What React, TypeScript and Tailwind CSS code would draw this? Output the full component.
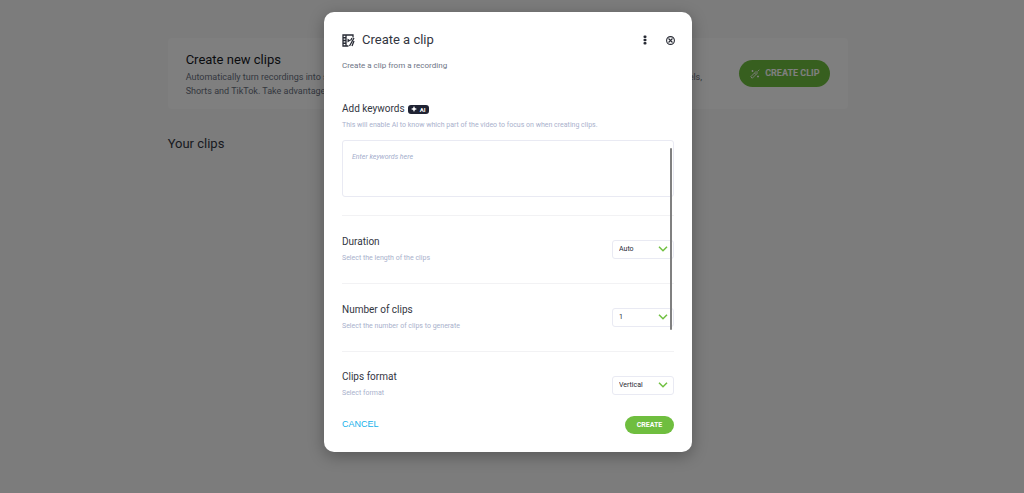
import type { ReactNode } from "react";

type SettingOption = {
  id: string;
  label: string;
  hint: string;
  options: string[];
};

const settings: SettingOption[] = [
  {
    id: "duration",
    label: "Duration",
    hint: "Select the length of the clips",
    options: ["Auto", "30 seconds", "60 seconds"],
  },
  {
    id: "clip-count",
    label: "Number of clips",
    hint: "Select the number of clips to generate",
    options: ["1", "2", "3"],
  },
  {
    id: "clip-format",
    label: "Clips format",
    hint: "Select format",
    options: ["Vertical", "Square", "Horizontal"],
  },
];

function WandIcon() {
  return (
    <svg viewBox="0 0 20 20" className="size-[10px]" fill="none" stroke="currentColor" strokeWidth="1.8">
      <path d="M1.5 15.5 12 5l3 3L4.500 18.500Z" />
      <path d="m9 8 3 3M5 2v4M3 4h4M16 13v4M14 15h4M15 5l3.500-3.500" />
    </svg>
  );
}

function FilmIcon() {
  return (
    <svg viewBox="0 0 26 26" className="size-[13px]" fill="none" stroke="currentColor" strokeWidth="2.6">
      <path d="M22 7V2H2v22h11M8 2v22" />
      <path d="M2 7.500h6M2 13h6M2 18.500h6" />
      <path d="m11 9 6 4-6 4Z" fill="currentColor" stroke="none" />
      <path d="m24 8-9 16M20 8l-3 5M24 14l-4 10" />
    </svg>
  );
}

function CloseIcon() {
  return (
    <svg viewBox="0 0 18 18" className="size-[9px]" fill="none" stroke="currentColor" strokeWidth="2.2">
      <circle cx="9" cy="9" r="7.800" />
      <path d="m5 5 8 8M13 5l-8 8" />
    </svg>
  );
}

function MoreIcon() {
  return (
    <svg viewBox="0 0 4 10" className="h-[10px] w-1" fill="currentColor">
      <rect x="0.500" y="0.500" width="3" height="2.500" rx="1" />
      <rect x="0.500" y="3.800" width="3" height="2.500" rx="1" />
      <rect x="0.500" y="7.100" width="3" height="2.500" rx="1" />
    </svg>
  );
}

function AiBadge() {
  return (
    <span className="flex h-[9px] w-[21px] items-center justify-center gap-[3px] rounded-[3px] bg-[#1f2333] text-[6px] font-bold text-white">
      <svg viewBox="0 0 10 10" className="size-[6px]" fill="currentColor">
        <path d="M5 0 6.500 3.500 10 5 6.500 6.500 5 10 3.500 6.500 0 5 3.500 3.500Z" />
      </svg>
      AI
    </span>
  );
}

function FieldLabel({ htmlFor, children }: { htmlFor: string; children: ReactNode }) {
  return (
    <label htmlFor={htmlFor} className="block text-[10px] leading-4 text-[#33363f]">
      {children}
    </label>
  );
}

function SettingRow({ setting }: { setting: SettingOption }) {
  return (
    <div className="flex h-[68px] items-center justify-between border-t border-[#f2f2f4] last-of-type:h-[67px]">
      <div>
        <FieldLabel htmlFor={setting.id}>{setting.label}</FieldLabel>
        <p className="text-[7px] leading-4 text-[#a9b1cc]">{setting.hint}</p>
      </div>
      <div className="relative">
        <select
          id={setting.id}
          className="block h-[19px] w-[62px] appearance-none rounded-[3px] border border-[#e9eaf3] bg-white pl-1.5 text-[7px] text-[#272a34]"
        >
          {setting.options.map((option) => (
            <option key={option}>{option}</option>
          ))}
        </select>
        <svg
          viewBox="0 0 10 6"
          className="pointer-events-none absolute top-[6px] right-1.5 h-[6px] w-[10px] text-[#70c040]"
          fill="none"
          stroke="currentColor"
          strokeWidth="1.5"
        >
          <path d="m1 0.800 4 4 4-4" />
        </svg>
      </div>
    </div>
  );
}

function ClipsPage() {
  return (
    <main className="mx-auto w-[67%] pt-[38px]">
      <section className="flex h-[71px] items-center justify-between rounded-[4px] bg-[#fefefe] pr-[18px] pl-[18px]">
        <div>
          <h2 className="text-[13px] leading-5 text-[#17191f]">Create new clips</h2>
          <p className="text-[9px] leading-[14px] text-[#6a7180]">
            Automatically turn recordings into short clips and share your best moments on social media platforms, including Instagram Reels,
            <br />
            Shorts and TikTok. Take advantage of AI to reach a wider audience.
          </p>
        </div>
        <button
          type="button"
          className="flex h-[27px] w-[91px] shrink-0 items-center justify-center gap-[5px] rounded-full bg-[#6fbe3f] text-[9px] font-bold text-white"
        >
          <WandIcon />
          CREATE CLIP
        </button>
      </section>
      <h1 className="mt-[25px] text-[13px] leading-5 text-[#33363f]">Your clips</h1>
    </main>
  );
}

function CreateClipDialog() {
  return (
    <section
      role="dialog"
      aria-modal="true"
      aria-labelledby="dialog-title"
      className="w-[368px] rounded-[10px] bg-white px-[18px] pb-[18px] shadow-[0_4px_16px_rgba(0,0,0,0.3)]"
    >
      <header className="pt-[18px]">
        <div className="flex h-5 items-center text-[#272a34]">
          <FilmIcon />
          <h2 id="dialog-title" className="ml-[7px] flex-1 text-[13px] leading-5 text-[#33363f]">
            Create a clip
          </h2>
          <button type="button" aria-label="More options" className="mr-[19px]">
            <MoreIcon />
          </button>
          <button type="button" aria-label="Close" className="mr-[-1px]">
            <CloseIcon />
          </button>
        </div>
        <p className="mt-2 text-[8px] leading-4 text-[#6d7485]">Create a clip from a recording</p>
      </header>
      <div className="mt-[27px]">
        <div className="flex items-center gap-[3px]">
          <FieldLabel htmlFor="keywords">Add keywords</FieldLabel>
          <AiBadge />
        </div>
        <p className="text-[7px] leading-4 text-[#a9b1cc]">
          This will enable AI to know which part of the video to focus on when creating clips.
        </p>
        <div className="relative mt-[7px]">
          <textarea
            id="keywords"
            placeholder="Enter keywords here"
            className="mb-[18px] block h-[57px] w-full resize-none rounded-[3px] border border-[#e9eaf3] px-[9px] py-2 text-[7px] leading-4 placeholder:text-[#a3adcb] placeholder:italic"
          />
          <div className="absolute top-2 right-[2px] z-10 h-[182px] w-[2px] rounded-full bg-[#808080]" />
        </div>
        <div>
          {settings.map((setting) => (
            <SettingRow key={setting.id} setting={setting} />
          ))}
        </div>
      </div>
      <footer className="-mt-[2px] flex items-center justify-between">
        <button type="button" className="font-['Liberation_Sans',sans-serif] text-[9px] text-[#14b1ea]">
          CANCEL
        </button>
        <button type="button" className="h-[18px] w-[49px] rounded-full bg-[#6fbe3f] text-[7px] font-bold text-white">
          CREATE
        </button>
      </footer>
    </section>
  );
}

export default function App() {
  return (
    <div className="relative min-h-screen bg-[#f8f8f8] pr-2 font-[Roboto,sans-serif]">
      <ClipsPage />
      <div className="absolute inset-0 z-20 flex items-start justify-center bg-black/50 pt-3 pr-2">
        <CreateClipDialog />
      </div>
    </div>
  );
}
